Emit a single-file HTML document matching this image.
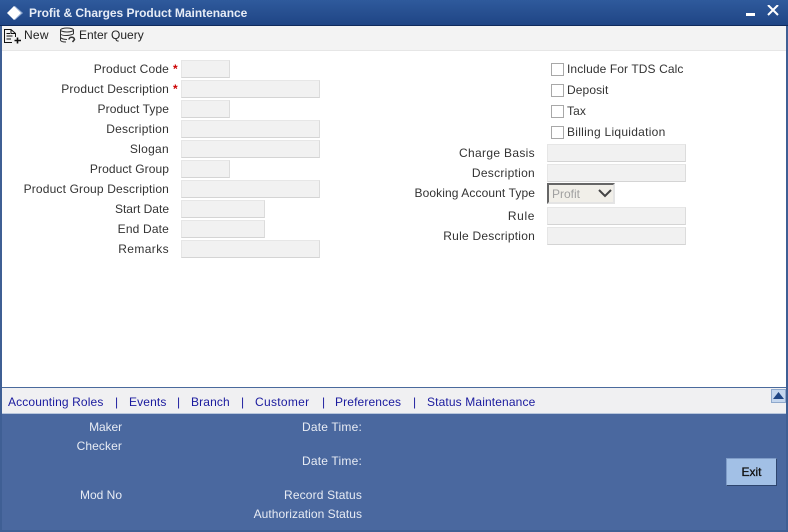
<!DOCTYPE html>
<html><head><meta charset="utf-8">
<style>
html,body{margin:0;padding:0;background:#fff}
#r{position:relative;width:788px;height:532px;overflow:hidden;background:#fff;font:12px "Liberation Sans",sans-serif;color:#333}
#r div{position:absolute;white-space:nowrap}
.l{text-align:right;height:14px;line-height:14px;color:#333;letter-spacing:.16px}
.f{background:#f1f1f1;border:1px solid #e6e6e6;border-right-color:#dcdcdc;border-bottom-color:#d4d4d4;box-sizing:border-box;height:18px}
.c{width:13px;height:13px;box-sizing:border-box;background:#fff;border:1px solid #a8a8a8}
.t{height:14px;line-height:14px;color:#333}
.k{letter-spacing:.1px}
.w{color:#e8ecf4;text-align:right;height:14px;line-height:14px}
.n{color:#1a1a9e;top:395px;height:14px;line-height:14px;letter-spacing:.13px}
</style></head><body><div id="r">
<div style="left:0;top:0;width:788px;height:26px;background:linear-gradient(#2f5a9c,#1f4585);border-bottom:1px solid #0f2a5c;box-sizing:border-box"></div>
<svg style="position:absolute;left:6px;top:5px" width="19" height="17"><polygon points="9,1 17,8 9,15 2,8" fill="#8fa8d0"/><polygon points="8,1 15,8 8,15 1,8" fill="#fff"/></svg>
<div style="left:29px;top:6px;font-weight:bold;color:#e6ecf6;line-height:15px;letter-spacing:-.03px">Profit &amp; Charges Product Maintenance</div>
<div style="left:746px;top:13px;width:9px;height:3px;background:#fff"></div>
<svg style="position:absolute;left:767px;top:5px" width="12" height="11"><path d="M1 0L11 10M11 0L1 10" stroke="#fff" stroke-width="2" fill="none"/></svg>
<div style="left:0;top:26px;width:788px;height:25px;background:#f3f3f3;border-bottom:1px solid #e6e6e6;box-sizing:border-box"></div>
<svg style="position:absolute;left:4px;top:28px" width="18" height="16" fill="none" stroke="#111" stroke-width="1"><path d="M.5 15V1.500H7L11.500 5.500V9M.5 14.500H8M7 1.500V5.500H11.500M2.500 5.500H6M2.500 8H8.500M2.500 11H7"/><path d="M13.500 9.500V15.500M10.500 12.500H17" stroke-width="1.600"/></svg>
<div class="t" style="left:24px;top:28px;color:#222;letter-spacing:.25px">New</div>
<svg style="position:absolute;left:59px;top:27px" width="17" height="17" fill="none" stroke="#333"><ellipse cx="8" cy="3" rx="6.500" ry="2"/><path d="M1.500 3V13C1.500 14.500 4 15 7 15M14.500 3V7M1.500 7C3 9 10 9 14.500 7M1.500 10.500C3 12 6 12.500 8 12.500"/><path d="M10 12.500C10 9.500 15 9.500 15.500 12.500L13.500 15" stroke-width="1.500"/></svg>
<div class="t" style="left:79px;top:28px;color:#222">Enter Query</div>

<div class="l" style="right:619px;top:62px">Product Code</div>
<div class="l" style="right:619px;top:82px">Product Description</div>
<div class="l" style="right:619px;top:102px;letter-spacing:.08px">Product Type</div>
<div class="l" style="right:619px;top:122px;letter-spacing:.25px">Description</div>
<div class="l" style="right:619px;top:142px;letter-spacing:.3px">Slogan</div>
<div class="l" style="right:619px;top:162px;letter-spacing:.08px">Product Group</div>
<div class="l" style="right:619px;top:182px">Product Group Description</div>
<div class="l" style="right:619px;top:202px;letter-spacing:0">Start Date</div>
<div class="l" style="right:619px;top:222px">End Date</div>
<div class="l" style="right:619px;top:242px;letter-spacing:.4px">Remarks</div>
<div style="left:173px;top:62px;color:#c00;font-weight:bold;line-height:14px">*</div>
<div style="left:173px;top:82px;color:#c00;font-weight:bold;line-height:14px">*</div>

<div class="f" style="left:181px;top:60px;width:49px"></div>
<div class="f" style="left:181px;top:80px;width:139px"></div>
<div class="f" style="left:181px;top:100px;width:49px"></div>
<div class="f" style="left:181px;top:120px;width:139px"></div>
<div class="f" style="left:181px;top:140px;width:139px"></div>
<div class="f" style="left:181px;top:160px;width:49px"></div>
<div class="f" style="left:181px;top:180px;width:139px"></div>
<div class="f" style="left:181px;top:200px;width:84px"></div>
<div class="f" style="left:181px;top:220px;width:84px"></div>
<div class="f" style="left:181px;top:240px;width:139px"></div>

<div class="c" style="left:551px;top:63px"></div><div class="t k" style="left:567px;top:62px">Include For TDS Calc</div>
<div class="c" style="left:551px;top:84px"></div><div class="t k" style="left:567px;top:83px">Deposit</div>
<div class="c" style="left:551px;top:105px"></div><div class="t k" style="left:567px;top:104px">Tax</div>
<div class="c" style="left:551px;top:126px"></div><div class="t" style="left:567px;top:125px;letter-spacing:.27px">Billing Liquidation</div>

<div class="l" style="right:253px;top:146px;letter-spacing:.33px">Charge Basis</div>
<div class="l" style="right:253px;top:166px;letter-spacing:.28px">Description</div>
<div class="l" style="right:253px;top:186px;letter-spacing:.1px">Booking Account Type</div>
<div class="l" style="right:253px;top:209px;letter-spacing:.6px">Rule</div>
<div class="l" style="right:253px;top:229px;letter-spacing:.23px">Rule Description</div>
<div class="f" style="left:547px;top:144px;width:139px"></div>
<div class="f" style="left:547px;top:164px;width:139px"></div>
<div style="left:547px;top:183px;width:68px;height:21px;box-sizing:border-box;background:#f1efe9;border:2px solid #e4e4e4;border-top-color:#666;border-left-color:#666"></div>
<div style="left:552px;top:187px;color:#a0a0a0;line-height:14px">Profit</div>
<svg style="position:absolute;left:598px;top:189px" width="14" height="9"><path d="M1 1L7 7L13 1" stroke="#444" stroke-width="2" fill="none"/></svg>
<div class="f" style="left:547px;top:207px;width:139px"></div>
<div class="f" style="left:547px;top:227px;width:139px"></div>

<div style="left:0;top:387px;width:788px;height:27px;background:#f0f0f2;border-top:1px solid #4a6a9c;border-bottom:1px solid #b8c6dc;box-sizing:border-box"></div>
<div class="n" style="left:8px">Accounting Roles</div>
<div class="n" style="left:115px">|</div>
<div class="n" style="left:129px">Events</div>
<div class="n" style="left:177px">|</div>
<div class="n" style="left:191px">Branch</div>
<div class="n" style="left:241px">|</div>
<div class="n" style="left:255px;letter-spacing:.3px">Customer</div>
<div class="n" style="left:322px">|</div>
<div class="n" style="left:335px">Preferences</div>
<div class="n" style="left:413px">|</div>
<div class="n" style="left:427px">Status Maintenance</div>
<div style="left:771px;top:389px;width:15px;height:14px;box-sizing:border-box;background:#c4d6ee;border:1px solid #8ea8cc"></div>
<svg style="position:absolute;left:773px;top:392px" width="11" height="7"><polygon points="5.500,0 11,7 0,7" fill="#1f4585"/></svg>

<div style="left:0;top:414px;width:788px;height:118px;background:#4a689f"></div>
<div class="w" style="right:666px;top:420px;letter-spacing:-.1px">Maker</div>
<div class="w" style="right:666px;top:439px;letter-spacing:.1px">Checker</div>
<div class="w" style="right:666px;top:488px">Mod No</div>
<div class="w" style="right:426px;top:420px;letter-spacing:.2px">Date Time:</div>
<div class="w" style="right:426px;top:454px;letter-spacing:.2px">Date Time:</div>
<div class="w" style="right:426px;top:488px;letter-spacing:.15px">Record Status</div>
<div class="w" style="right:426px;top:507px;letter-spacing:.05px">Authorization Status</div>
<div style="left:726px;top:458px;width:51px;height:28px;box-sizing:border-box;background:#a2c0e6;border:1px solid #7f9cc8;border-right-color:#2e456e;border-bottom-color:#2e456e;color:#111;text-align:center;line-height:26px;-webkit-text-stroke:.3px #111">Exit</div>

<div style="left:0;top:26px;width:2px;height:506px;background:#3f5f94"></div>
<div style="right:0;top:26px;width:2px;height:506px;background:#3f5f94"></div>
<div style="left:0;top:530px;width:788px;height:2px;background:#3f5f94"></div>
</div></body></html>
